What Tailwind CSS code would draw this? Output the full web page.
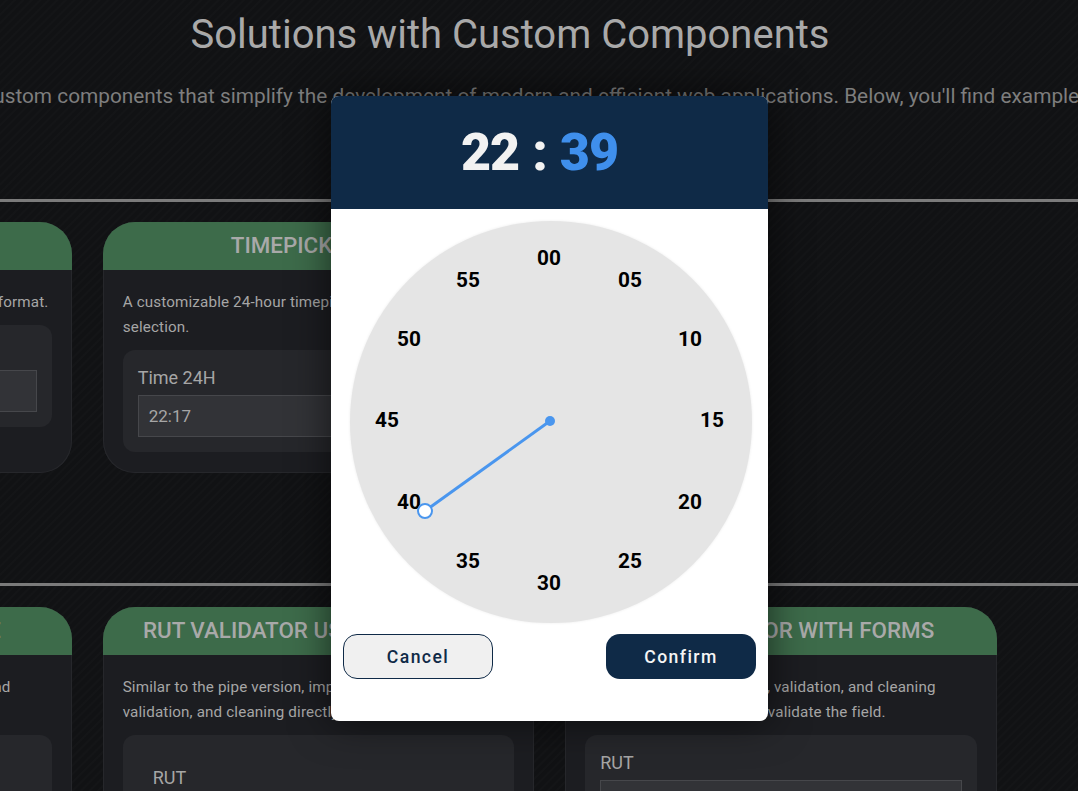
<!DOCTYPE html>
<html lang="en">
<head>
  <meta charset="UTF-8" />
  <meta name="viewport" content="width=device-width,initial-scale=1" />
  <title>Solutions with Custom Components</title>
  <script src="https://cdn.jsdelivr.net/npm/@tailwindcss/browser@4"></script>
</head>
<body class="bg-[#111214] font-['Roboto',sans-serif]">
  <div class="relative w-[1078px] h-[791px] overflow-hidden bg-[repeating-linear-gradient(135deg,#111214_0px,#111214_3px,#141517_4px,#141517_5px,#111214_6px)]">

    <!-- page behind the dialog -->
    <div class="w-[1078px]">
      <div class="w-[1020px] h-[199px] pt-[11px] flex flex-col items-center">
        <h1 class="text-[40px] leading-[48px] font-normal text-[#a9a9a9] whitespace-nowrap">Solutions with Custom Components</h1>
        <p class="mt-[23px] mr-[96px] text-[20.8px] leading-[28px] text-[#7e7e7e] whitespace-nowrap">Explore a set of custom components that simplify the development of modern and efficient web applications. Below, you'll find examples</p>
      </div>
      <div class="h-[3px] bg-[#7b7b7b]"></div>

      <div class="grid grid-cols-[431.4px_431.4px_431.4px] gap-x-[31.2px] ml-[-359.9px] mt-[20px] h-[361px] items-start">
        <section class="h-[251px] rounded-[32px] bg-[#1c1d21] shadow-[inset_0_0_0_1px_#26272b] overflow-hidden">
          <h2 class="h-[48px] bg-[#3d6b4a] text-center text-[22.4px] leading-[46px] font-medium text-[#a9a9a9]">RUT FORMATTER</h2>
          <div class="px-5 pt-[20px]">
            <p class="text-[15.2px] leading-[25px] tracking-[0.15px] text-[#a6a6a6] text-right pr-[3px] whitespace-nowrap">A pipe that displays a RUT in its standard format.</p>
            <div class="mt-[10px] h-[102px] rounded-xl bg-[#26272b] px-[15px] pt-[15px]">
              <label class="block text-[18px] leading-[25px] text-[#a6a6a6]">RUT</label>
              <div class="mt-[5px] h-[42px] border border-[#46474b] bg-[#323337]"></div>
            </div>
          </div>
        </section>
        <section class="h-[251px] rounded-[32px] bg-[#1c1d21] shadow-[inset_0_0_0_1px_#26272b] overflow-hidden">
          <h2 class="h-[48px] bg-[#3d6b4a] text-center text-[22.4px] leading-[46px] font-medium text-[#a9a9a9]">TIMEPICKER 24H</h2>
          <div class="px-5 pt-[20px]">
            <p class="text-[15.2px] leading-[25px] tracking-[0.15px] text-[#a6a6a6] whitespace-nowrap">A customizable 24-hour timepicker with a clock dial for quick<br>selection.</p>
            <div class="mt-[10px] h-[102px] rounded-xl bg-[#26272b] px-[15px] pt-[15px]">
              <label class="block text-[18px] leading-[25px] text-[#a6a6a6]">Time 24H</label>
              <div class="mt-[5px] h-[42px] border border-[#46474b] bg-[#323337] px-[10px] text-[17px] leading-[40px] text-[#a6a6a6]">22:17</div>
            </div>
          </div>
        </section>
      </div>

      <div class="h-[3px] bg-[#7b7b7b]"></div>

      <div class="grid grid-cols-[431.4px_431.4px_431.4px] gap-x-[31.2px] ml-[-359.9px] mt-[21px] items-start">
        <section class="h-[300px] rounded-[32px] bg-[#1c1d21] shadow-[inset_0_0_0_1px_#26272b] overflow-hidden">
          <h2 class="h-[48px] bg-[#3d6b4a] text-center text-[22.4px] leading-[46px] font-medium text-[#a9a9a9]">RUT VALIDATOR USING PIPE</h2>
          <div class="px-5 pt-[20px]">
            <p class="text-[15.2px] leading-[25px] tracking-[0.15px] text-[#a6a6a6] text-right pr-[41px] whitespace-nowrap">A pipe that checks a RUT, with formatting and</p>
            <div class="mt-[35px] h-[100px] rounded-xl bg-[#26272b]"></div>
          </div>
        </section>
        <section class="h-[300px] rounded-[32px] bg-[#1c1d21] shadow-[inset_0_0_0_1px_#26272b] overflow-hidden">
          <h2 class="h-[48px] bg-[#3d6b4a] text-center text-[22.4px] leading-[46px] font-medium text-[#a9a9a9] whitespace-nowrap">RUT VALIDATOR USING DIRECTIVE</h2>
          <div class="px-5 pt-[20px]">
            <p class="text-[15.2px] leading-[25px] tracking-[0.15px] text-[#a6a6a6] whitespace-nowrap">Similar to the pipe version, implements formatting,<br>validation, and cleaning directly in the input.</p>
            <div class="mt-[10px] h-[100px] rounded-xl bg-[#26272b] px-[30px] pt-[30px]">
              <label class="block text-[18px] leading-[25px] text-[#a6a6a6]">RUT</label>
            </div>
          </div>
        </section>
        <section class="h-[300px] rounded-[32px] bg-[#1c1d21] shadow-[inset_0_0_0_1px_#26272b] overflow-hidden">
          <h2 class="h-[48px] bg-[#3d6b4a] text-center text-[22.4px] leading-[46px] font-medium text-[#a9a9a9]">RUT VALIDATOR WITH FORMS</h2>
          <div class="px-5 pt-[20px]">
            <p class="text-[15.2px] leading-[25px] tracking-[0.15px] text-[#a6a6a6] whitespace-nowrap">
              <span class="block text-right pr-[41px]">Uses forms for formatting, validation, and cleaning</span>
              <span class="block text-right pr-[91px]">of the RUT, using a rule to validate the field.</span>
            </p>
            <div class="mt-[10px] h-[100px] rounded-xl bg-[#26272b] px-[15px] pt-[15px]">
              <label class="block text-[18px] leading-[25px] text-[#a6a6a6]">RUT</label>
              <div class="mt-[5px] h-[42px] border border-[#46474b] bg-[#323337]"></div>
            </div>
          </div>
        </section>
      </div>
    </div>

    <!-- timepicker dialog -->
    <div class="absolute left-[331px] top-[96px] w-[437px] h-[625px] rounded-lg bg-white overflow-hidden shadow-[0_0_40px_rgba(0,0,0,0.6)]">
      <div class="h-[113px] bg-[#0f2a47] flex items-center justify-center text-[52px] font-black leading-none tracking-[-1px] text-[#f2f2f2] gap-[13px] pr-[20px] pt-[1px]">
        <span>22</span><span>:</span><span class="text-[#3f8fec]">39</span>
      </div>
      <div class="relative mt-[12px] ml-[19px] w-[402px] h-[402px] rounded-full bg-[#e5e5e5] shadow-[0_0_3px_rgba(0,0,0,0.08)]">
        <span class="absolute left-[183px] top-[25px] w-[32px] text-center text-[20.8px] leading-[24px] font-bold text-black">00</span>
        <span class="absolute left-[264px] top-[47px] w-[32px] text-center text-[20.8px] leading-[24px] font-bold text-black">05</span>
        <span class="absolute left-[324px] top-[106px] w-[32px] text-center text-[20.8px] leading-[24px] font-bold text-black">10</span>
        <span class="absolute left-[346px] top-[187px] w-[32px] text-center text-[20.8px] leading-[24px] font-bold text-black">15</span>
        <span class="absolute left-[324px] top-[269px] w-[32px] text-center text-[20.8px] leading-[24px] font-bold text-black">20</span>
        <span class="absolute left-[264px] top-[328px] w-[32px] text-center text-[20.8px] leading-[24px] font-bold text-black">25</span>
        <span class="absolute left-[183px] top-[350px] w-[32px] text-center text-[20.8px] leading-[24px] font-bold text-black">30</span>
        <span class="absolute left-[102px] top-[328px] w-[32px] text-center text-[20.8px] leading-[24px] font-bold text-black">35</span>
        <span class="absolute left-[43px] top-[269px] w-[32px] text-center text-[20.8px] leading-[24px] font-bold text-black">40</span>
        <span class="absolute left-[21px] top-[187px] w-[32px] text-center text-[20.8px] leading-[24px] font-bold text-black">45</span>
        <span class="absolute left-[43px] top-[106px] w-[32px] text-center text-[20.8px] leading-[24px] font-bold text-black">50</span>
        <span class="absolute left-[102px] top-[47px] w-[32px] text-center text-[20.8px] leading-[24px] font-bold text-black">55</span>
        <svg class="absolute inset-0" width="402" height="402" viewBox="0 0 402 402" fill="none">
          <line x1="200" y1="200" x2="75" y2="290" stroke="#4a96ee" stroke-width="3"/>
          <circle cx="200" cy="200" r="5" fill="#4a96ee"/>
          <circle cx="75" cy="290" r="7" fill="#fff" stroke="#4a96ee" stroke-width="2"/>
        </svg>
      </div>
      <div class="flex justify-between px-[12px] mt-[11px]">
        <button class="w-[150px] h-[45px] pt-[2px] rounded-[14px] border border-[#0f2a47] bg-[#f0f0f0] text-[#0f2a47] text-[17.6px] font-medium tracking-[1.4px]">Cancel</button>
        <button class="w-[150px] h-[45px] pt-[2px] rounded-[14px] bg-[#0f2a47] text-[#f5f5f5] text-[17.6px] font-medium tracking-[1.4px]">Confirm</button>
      </div>
    </div>
  </div>
</body>
</html>
